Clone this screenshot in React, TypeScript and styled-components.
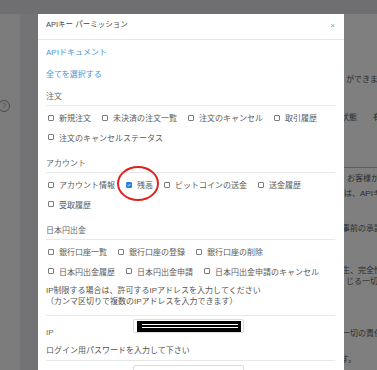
import React from "react";
import styled, { createGlobalStyle } from "styled-components";

const Global = createGlobalStyle`
  *, *::before, *::after { box-sizing: border-box; }
  html, body { margin: 0; padding: 0; }
  body {
    width: 377px;
    height: 370px;
    overflow: hidden;
    background: #7f7f7f;
    font-family: "Liberation Sans", "Noto Sans CJK JP", sans-serif;
  }
`;

const Page = styled.div`
  position: relative;
  width: 377px;
  height: 370px;
  overflow: hidden;
  display: flex;
  flex-direction: column;
  background: #7f7f7f;
`;

const TopBar = styled.div`
  flex: none;
  height: 14px;
  background: #6f6f71;
`;

const PageBody = styled.div`
  flex: 1;
  display: flex;
  min-height: 0;
`;

const Rail = styled.div`
  flex: none;
  width: 20px;
  background: #7b7b7b;
  display: flex;
  flex-direction: column;
`;

const RailSection = styled.div`
  height: 72px;
  border-bottom: 1px solid #5f8787;
`;

const HelpIcon = styled.span`
  margin: 14px 0 0 -2px;
  width: 12px;
  height: 12px;
  border: 1px solid #4c4c4c;
  border-radius: 50%;
  color: #4c4c4c;
  font-size: 8px;
  line-height: 1;
  display: flex;
  align-items: center;
  justify-content: center;
`;

const Strip = styled.div`
  flex: none;
  width: 18px;
  background: #737375;
`;

const Main = styled.div`
  flex: 1;
  min-width: 0;
  display: flex;
  flex-direction: column;
  padding-left: 302px;
  color: #2c2c2c;
  font-size: 8px;
  white-space: nowrap;
`;

const BgLine = styled.div<{ $mt: number; $indent: number }>`
  margin-top: ${(p) => p.$mt}px;
  padding-left: ${(p) => p.$indent}px;
  height: 11px;
  line-height: 11px;
  display: flex;
`;

const Far = styled.span`
  margin-left: 16px;
`;

const RedRule = styled.div<{ $mt: number }>`
  margin-top: ${(p) => p.$mt}px;
  margin-left: 4px;
  height: 1px;
  background: #9a4646;
`;

const Modal = styled.div`
  position: absolute;
  left: 38px;
  top: 14px;
  width: 306px;
  height: 380px;
  background: #ffffff;
  display: flex;
  flex-direction: column;
`;

const Header = styled.div`
  height: 26px;
  border-bottom: 1px solid #e6e6e6;
  padding: 6px 9px 0 8px;
  display: flex;
  justify-content: space-between;
  align-items: flex-start;
`;

const Title = styled.div`
  font-size: 7.5px;
  line-height: 10px;
  color: #444;
`;

const Close = styled.span`
  font-size: 8px;
  line-height: 12px;
  color: #9a9a9a;
`;

const Body = styled.div`
  padding: 0 9px 0 8px;
  display: flex;
  flex-direction: column;
`;

const LinkRow = styled.div`
  height: 22px;
  display: flex;
  align-items: center;
  font-size: 8px;
  color: #4a98d2;
`;

const SectionLabel = styled.div`
  height: 21px;
  display: flex;
  align-items: center;
  padding-top: 1px;
  font-size: 8px;
  color: #666;
`;

const Group = styled.div`
  border-top: 1px solid #e8e8e8;
  padding: 2px 0 4px;
  display: flex;
  flex-wrap: wrap;
  column-gap: 9px;
`;

const Item = styled.label`
  position: relative;
  height: 19.5px;
  margin-left: 2px;
  display: inline-flex;
  align-items: center;
  gap: 5px;
  font-size: 8px;
  color: #5a5a5a;
  white-space: nowrap;
`;

const Box = styled.span<{ $checked?: boolean }>`
  flex: none;
  width: 6px;
  height: 6px;
  border: 1px solid ${(p) => (p.$checked ? "#2a7be4" : "#7c7c7c")};
  border-radius: 1px;
  background: ${(p) => (p.$checked ? "#2a7be4" : "#fff")};
  display: flex;
  align-items: center;
  justify-content: center;
`;

const Ring = styled.span`
  position: absolute;
  left: -9px;
  top: -9px;
  width: 42px;
  height: 35px;
  border: 2px solid #e0221f;
  border-radius: 50%;
  pointer-events: none;
`;

const Note = styled.div`
  font-size: 8px;
  line-height: 11px;
  color: #555;
  padding-bottom: 8px;
  border-bottom: 1px solid #e8e8e8;
  white-space: nowrap;
`;

const FormRow = styled.div<{ $h: number; $pt: number }>`
  height: ${(p) => p.$h}px;
  padding-top: ${(p) => p.$pt}px;
  display: flex;
  align-items: flex-start;
`;

const FieldLabel = styled.div`
  width: 87px;
  padding-top: 8px;
  font-size: 8px;
  line-height: 11px;
  color: #666;
`;

const Input = styled.div`
  width: 111px;
  height: 14px;
  border: 1px solid #dcdcdc;
  border-radius: 2px;
  padding: 1px 2px 0 3px;
  background: #fff;
`;

const Redact = styled.div`
  height: 11px;
  background: #000;
  padding: 3px 3px 0 5px;
`;

const RedactLines = styled.div`
  height: 4px;
  border-top: 1px solid #fff;
  border-bottom: 1px solid #fff;
`;

const LoginLabel = styled.div`
  padding: 5px 0 3px;
  font-size: 8px;
  line-height: 12px;
  color: #555;
  border-bottom: 1px solid #e8e8e8;
`;

const Check = () => (
  <svg width="5" height="4" viewBox="0 0 5 4">
    <path d="M0.6 2.1 L1.9 3.3 L4.4 0.6" fill="none" stroke="#fff" strokeWidth="1" />
  </svg>
);

type Opt = { label: string; checked?: boolean; ring?: boolean };

const CheckItem = ({ label, checked, ring }: Opt) => (
  <Item>
    <Box $checked={checked}>{checked && <Check />}</Box>
    {label}
    {ring && <Ring />}
  </Item>
);

const orders: Opt[] = [
  { label: "新規注文" },
  { label: "未決済の注文一覧" },
  { label: "注文のキャンセル" },
  { label: "取引履歴" },
  { label: "注文のキャンセルステータス" },
];

const account: Opt[] = [
  { label: "アカウント情報" },
  { label: "残高", checked: true, ring: true },
  { label: "ビットコインの送金" },
  { label: "送金履歴" },
  { label: "受取履歴" },
];

const bank: Opt[] = [
  { label: "銀行口座一覧" },
  { label: "銀行口座の登録" },
  { label: "銀行口座の削除" },
  { label: "日本円出金履歴" },
  { label: "日本円出金申請" },
  { label: "日本円出金申請のキャンセル" },
];

export default function App() {
  return (
    <>
      <Global />
      <Page>
        <TopBar />
        <PageBody>
          <Rail>
            <RailSection />
            <HelpIcon>?</HelpIcon>
          </Rail>
          <Strip />
          <Main>
            <BgLine $mt={60} $indent={6}>ができます</BgLine>
            <BgLine $mt={27} $indent={1}>
              状態<Far>有効</Far>
            </BgLine>
            <RedRule $mt={44} />
            <BgLine $mt={5} $indent={7}>お客様が</BgLine>
            <BgLine $mt={4} $indent={4}>は、APIキー</BgLine>
            <BgLine $mt={24} $indent={2}>事前の承認</BgLine>
            <BgLine $mt={31} $indent={2}>生、完全性</BgLine>
            <BgLine $mt={0} $indent={6}>じる一切の</BgLine>
            <BgLine $mt={41} $indent={2}>一切の責任</BgLine>
            <BgLine $mt={15} $indent={1}>す。</BgLine>
          </Main>
        </PageBody>

        <Modal>
          <Header>
            <Title>APIキー パーミッション</Title>
            <Close>×</Close>
          </Header>
          <Body>
            <LinkRow>APIドキュメント</LinkRow>
            <LinkRow>全てを選択する</LinkRow>

            <SectionLabel>注文</SectionLabel>
            <Group>
              {orders.map((o) => (
                <CheckItem key={o.label} {...o} />
              ))}
            </Group>

            <SectionLabel>アカウント</SectionLabel>
            <Group>
              {account.map((o) => (
                <CheckItem key={o.label} {...o} />
              ))}
            </Group>

            <SectionLabel>日本円出金</SectionLabel>
            <Group>
              {bank.map((o) => (
                <CheckItem key={o.label} {...o} />
              ))}
            </Group>

            <Note>
              IP制限する場合は、許可するIPアドレスを入力してください
              <br />
              （カンマ区切りで複数のIPアドレスを入力できます）
            </Note>

            <FormRow $h={24} $pt={3}>
              <FieldLabel>IP</FieldLabel>
              <Input>
                <Redact>
                  <RedactLines />
                </Redact>
              </Input>
            </FormRow>

            <LoginLabel>ログイン用パスワードを入力して下さい</LoginLabel>

            <FormRow $h={30} $pt={4}>
              <FieldLabel />
              <Input />
            </FormRow>
          </Body>
        </Modal>
      </Page>
    </>
  );
}
